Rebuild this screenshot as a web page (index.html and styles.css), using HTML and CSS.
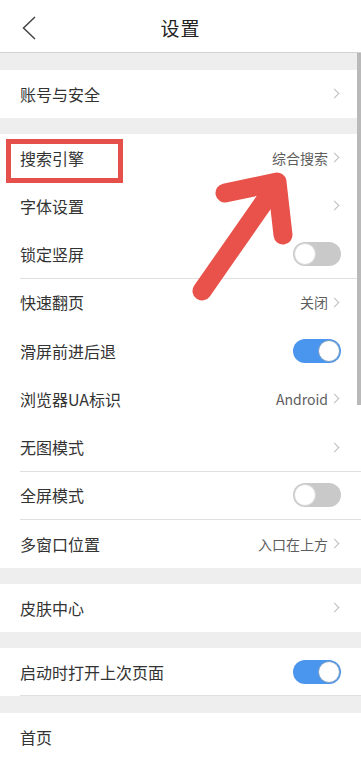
FILE: index.html
```html
<!DOCTYPE html>
<html lang="zh-CN">
<head>
<meta charset="utf-8">
<meta name="viewport" content="width=device-width, initial-scale=1">
<title>设置</title>
<link rel="stylesheet" href="styles.css">
</head>
<body>
<div class="page">
  <header class="topbar">
    <span class="back">
      <svg width="14" height="24" viewBox="0 0 14 24"><path d="M13 1 L1.5 12 L13 23" fill="none" stroke="#444" stroke-width="1.5"/></svg>
    </span>
    <h1 class="title">设置</h1>
  </header>

  <div class="gap gap-17"></div>
  <section class="group">
    <div class="row"><span class="label">账号与安全</span><span class="chev"></span></div>
  </section>

  <div class="gap gap-16"></div>
  <section class="group group-main">
    <div class="row"><span class="label">搜索引擎</span><span class="value">综合搜索</span><span class="chev"></span></div>
    <div class="row"><span class="label">字体设置</span><span class="chev"></span></div>
    <div class="row sep"><span class="label">锁定竖屏</span><span class="switch"><span class="knob"></span></span></div>
    <div class="row"><span class="label">快速翻页</span><span class="value">关闭</span><span class="chev"></span></div>
    <div class="row"><span class="label">滑屏前进后退</span><span class="switch on"><span class="knob"></span></span></div>
    <div class="row"><span class="label">浏览器UA标识</span><span class="value">Android</span><span class="chev"></span></div>
    <div class="row sep"><span class="label">无图模式</span><span class="chev"></span></div>
    <div class="row sep"><span class="label">全屏模式</span><span class="switch"><span class="knob"></span></span></div>
    <div class="row"><span class="label">多窗口位置</span><span class="value">入口在上方</span><span class="chev"></span></div>
  </section>

  <div class="gap gap-16"></div>
  <section class="group">
    <div class="row"><span class="label">皮肤中心</span><span class="chev"></span></div>
  </section>

  <div class="gap gap-16"></div>
  <section class="group">
    <div class="row sep"><span class="label">启动时打开上次页面</span><span class="switch on"><span class="knob"></span></span></div>
  </section>

  <div class="gap gap-17"></div>
  <section class="group">
    <div class="row"><span class="label">首页</span></div>
  </section>

  <div class="scrollbar"></div>
  <div class="highlight"></div>
  <svg class="arrow" width="361" height="768" viewBox="0 0 361 768">
    <g fill="none" stroke="#e8524a" stroke-width="19" stroke-linecap="round" stroke-linejoin="round">
      <path d="M202 291 L271 192"/>
      <path d="M225 193 L277 182 L283 235"/>
    </g>
  </svg>
</div>
</body>
</html>
```

FILE: styles.css
```css
html, body {
  margin: 0;
  padding: 0;
  background: #ffffff;
}

body {
  font-family: "Noto Sans CJK SC", "Noto Sans", "DejaVu Sans", sans-serif;
  color: #333333;
}

.page {
  position: relative;
  width: 361px;
  min-height: 768px;
  overflow: hidden;
  background: #ffffff;
}

.topbar {
  height: 52px;
  border-bottom: 1px solid #d2d2d2;
  display: flex;
  align-items: center;
  justify-content: center;
  position: relative;
  background: #ffffff;
}

.back {
  position: absolute;
  left: 22px;
  top: 16px;
  width: 14px;
  height: 24px;
  display: flex;
}

.title {
  margin: 0;
  font-size: 19px;
  font-weight: normal;
  color: #222222;
  letter-spacing: 1px;
  line-height: 1;
  padding-top: 2px;
}

.gap {
  background: #eeeeee;
}

.gap-16 { height: 16px; }
.gap-17 { height: 17px; }

.group {
  background: #ffffff;
}

.row {
  height: 48px;
  box-sizing: border-box;
  margin-left: 20px;
  padding-right: 20px;
  display: flex;
  align-items: center;
  border-bottom: 1px solid transparent;
}

.group-main .row {
  height: 48.25px;
}

.row.sep {
  border-bottom-color: #e0e0e0;
}

.label {
  flex: 1;
  font-size: 16px;
  color: #333333;
  line-height: 1;
}

.value {
  font-size: 14px;
  color: #5e5e5e;
  line-height: 1;
  margin-right: 3px;
}

.chev {
  width: 6px;
  height: 6px;
  margin-right: 3px;
  border-top: 1px solid #bdbdbd;
  border-right: 1px solid #bdbdbd;
  transform: rotate(45deg);
}

.switch {
  width: 48px;
  height: 24px;
  box-sizing: border-box;
  border-radius: 12px;
  background: #c9c9c9;
  display: flex;
  align-items: center;
  justify-content: flex-start;
  padding: 0 1px;
}

.switch .knob {
  width: 22px;
  height: 22px;
  box-sizing: border-box;
  border-radius: 50%;
  background: #ffffff;
  border: 1px solid #d8d8d8;
}

.switch.on {
  background: #4a95ee;
  justify-content: flex-end;
}

.switch.on .knob {
  border-color: #7d9fc4;
}

.scrollbar {
  position: absolute;
  right: 0;
  top: 53px;
  width: 4px;
  height: 352px;
  background: #b9b9b9;
}

.highlight {
  position: absolute;
  left: 6px;
  top: 139px;
  width: 117px;
  height: 44px;
  box-sizing: border-box;
  border: 5px solid #e5514a;
}

.arrow {
  position: absolute;
  left: 0;
  top: 0;
  pointer-events: none;
}
```
